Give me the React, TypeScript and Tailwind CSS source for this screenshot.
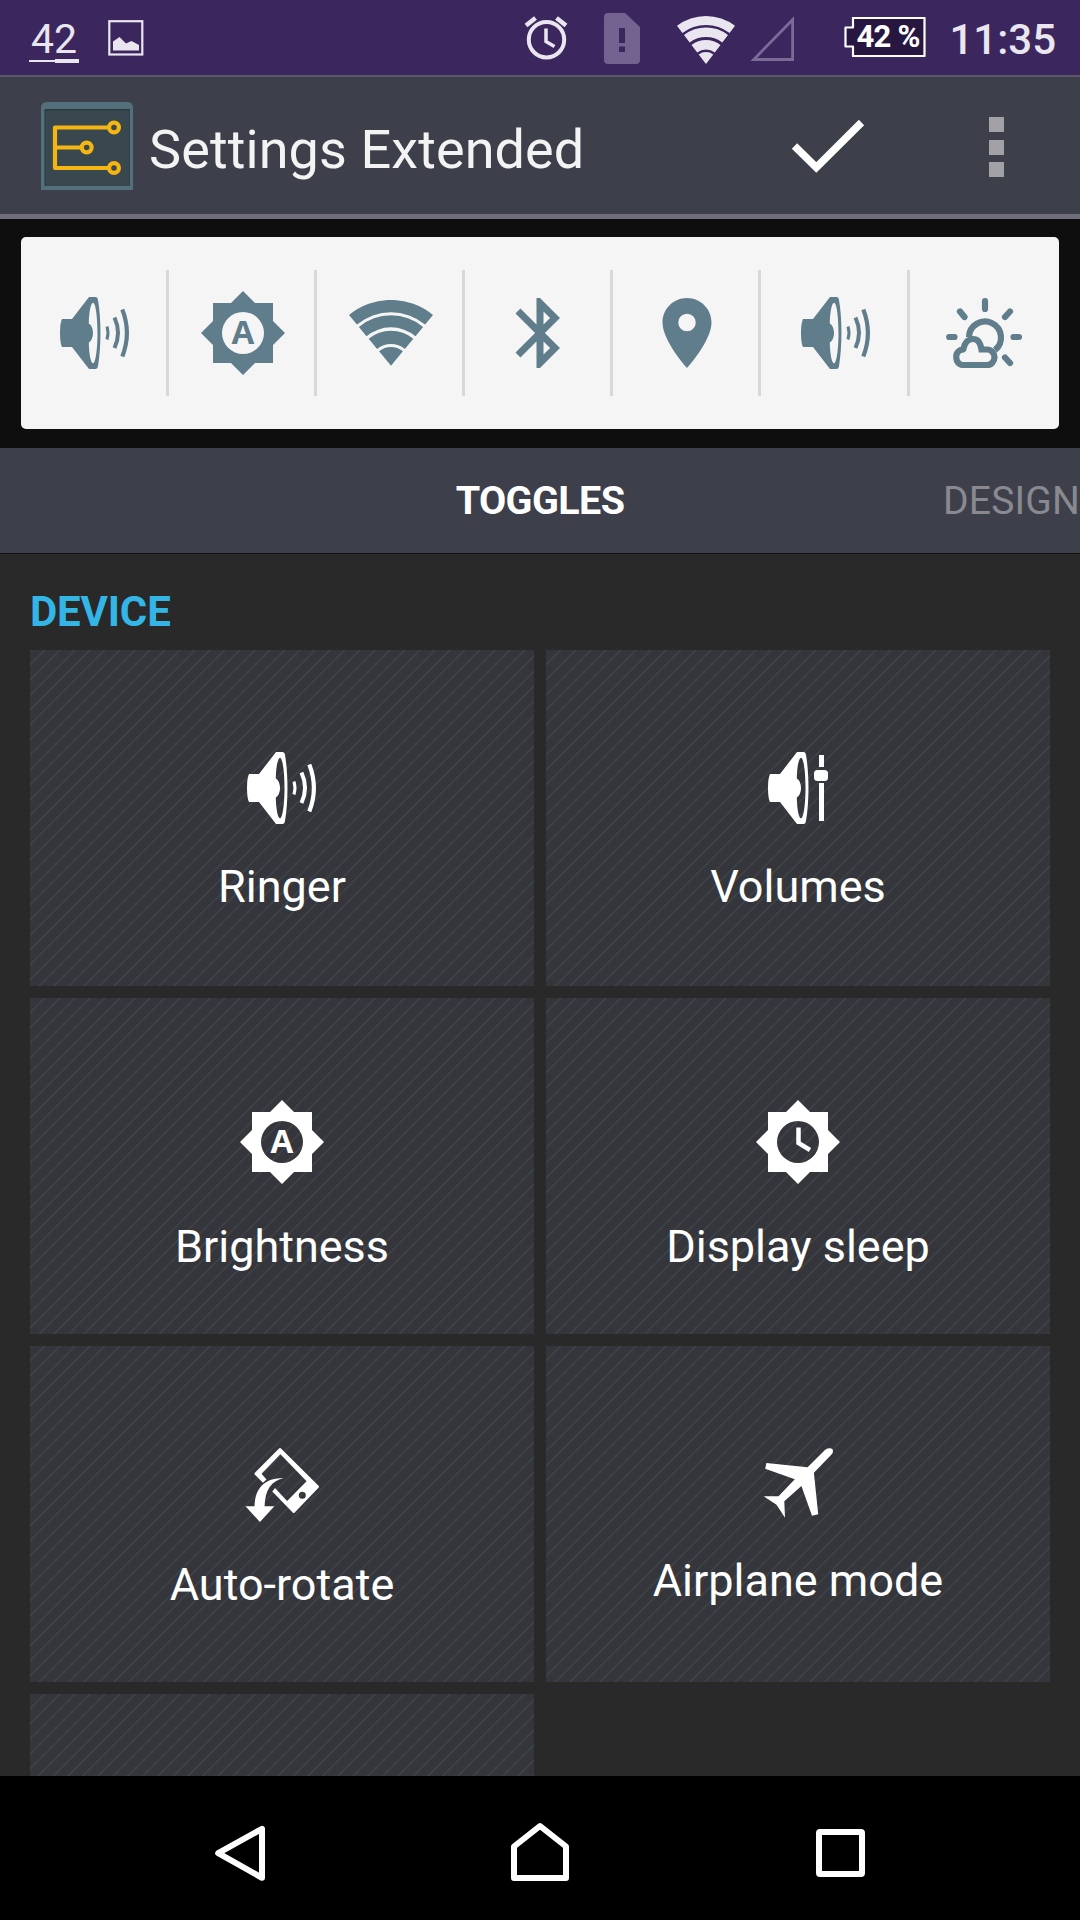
import type { ReactNode } from "react";
import { MdBluetooth, MdLocationOn } from "react-icons/md";

type Toggle = {
  label: string;
  icon: ReactNode;
};

const SpeakerCone = () => (
  <path
    fillRule="evenodd"
    d="M2 22H12L29 0H35.5Q37.5 0 38 3C41.3 22 41.3 50 38 69Q37.5 72 35.5 72H29L12 50H2Q0 46 0 36T2 22ZM33 5.7C31 5.7 29 14 28.8 26.5C31.5 28 33 32 33 36S31.5 44 28.8 45.5C29 58 31 66.3 33 66.3C35.5 66.3 37.5 53 37.5 36S35.5 5.7 33 5.7Z"
  />
);

const RingerIcon = () => (
  <svg width="70" height="72" viewBox="0 0 70 72" fill="currentColor">
    <SpeakerCone />
    <g fill="none" stroke="currentColor">
      <path d="M47 29.5Q49 36 47 42.5" strokeWidth="3" />
      <path d="M54.5 20.5Q61.5 36 54.5 51" strokeWidth="4" />
      <path d="M62.3 12.5Q71.5 36 62.3 59.5" strokeWidth="4.2" />
    </g>
  </svg>
);

const VolumesIcon = () => (
  <svg width="60" height="72" viewBox="0 0 60 72" fill="currentColor">
    <SpeakerCone />
    <rect x="51" y="3" width="5" height="12" />
    <rect x="46" y="18" width="14" height="11" rx="3.5" />
    <rect x="51" y="31" width="5" height="38" />
  </svg>
);

const Gear = ({ children }: { children: ReactNode }) => (
  <svg width="84" height="84" viewBox="-42 -42 84 84" fill="currentColor">
    <path
      fillRule="evenodd"
      d="M0-42L12-30H30V-12L42 0L30 12V30H12L0 42L-12 30H-30V12L-42 0L-30-12V-30H-12ZM0-21A21 21 0 1 0 0 21A21 21 0 1 0 0-21Z"
    />
    {children}
  </svg>
);

const BrightnessIcon = () => (
  <Gear>
    <text
      y="11"
      textAnchor="middle"
      className="font-['Open_Sans',sans-serif] text-[33px] font-bold"
    >
      A
    </text>
  </Gear>
);

const DisplaySleepIcon = () => (
  <Gear>
    <path d="M0.5-14.5V1L12 8" fill="none" stroke="currentColor" strokeWidth="4.5" />
  </Gear>
);

const AutoRotateIcon = () => (
  <svg width="75" height="74" viewBox="0 0 75 74" fill="currentColor">
    <path
      fillRule="evenodd"
      d="M34 0.6Q35 -0.4 36 0.6L73.5 37.7Q74.5 38.7 73.5 39.7L49.7 64.5Q48.7 65.5 47.7 64.5L27.3 43.5L30 40L42.1 53L61.6 33.3L35.4 6.3L16.5 25.7L21.5 31.5L18 34.8L9.9 26.7Q9 25.7 9.9 24.7ZM57.3 43.8A3.5 3.5 0 1 0 57.3 50.8A3.5 3.5 0 1 0 57.3 43.8Z"
    />
    <path d="M0.5 58.3H9.5C10 45 15 30 38.6 30C26 33 20 42 19.6 58.3H29.3L14.9 74Z" />
  </svg>
);

const AirplaneIcon = () => (
  <svg width="69" height="70" viewBox="0 0 69 70" fill="currentColor">
    <path d="M43.6 19.3L61.5 1.5Q63.5 0 66.5 0.2Q69 0.4 69 3Q69 5 67.5 6.5L49.9 24.7L54.2 66.3L48 67.7L37.4 38L20.3 53.3L21 69.7L12.5 56.7L-0.3 48.3H14.5L30.8 31.3L1.2 20.7L2.4 15Z" />
  </svg>
);

const WeatherIcon = () => (
  <svg
    width="76"
    height="71"
    viewBox="0 0 76 71"
    fill="none"
    stroke="currentColor"
    strokeWidth="6.2"
    strokeLinecap="round"
  >
    <path d="M39 3.2V11M67.5 39H73M3.2 39H8.5M59 19L64 13.5M14 13.5L18.5 19M59 59.5L64 65" />
    <path d="M23 39A16 16 0 1 1 49 52" strokeLinecap="butt" />
    <path d="M16 67A7.5 8 0 0 1 14.5 52Q18 51.5 17.5 50.5C19 44 22.5 41 27 41S34.5 44.5 35.5 51.5H41A7.5 7.75 0 0 1 41 67Z" />
  </svg>
);

const WifiIcon = () => (
  <svg width="84" height="66" viewBox="0 0 84 66" fill="currentColor">
    <path d="M0 15.1A65.7 65.7 0 0 1 84 15.1L76.1 24.6A53.4 53.4 0 0 0 7.9 24.6Z" />
    <path d="M9.9 26.9A50.4 50.4 0 0 1 74.1 26.9L66.5 36.2A38.4 38.4 0 0 0 17.5 36.2Z" />
    <path d="M19.7 38.7A35 35 0 0 1 64.3 38.7L55.9 49A21.7 21.7 0 0 0 28.1 49Z" />
    <path d="M30.1 51.3A18.7 18.7 0 0 1 53.9 51.3L42 65.7Z" />
  </svg>
);

const panelIcons: ReactNode[] = [
  <RingerIcon />,
  <BrightnessIcon />,
  <WifiIcon />,
  <MdBluetooth size={84} className="ml-0.5" />,
  <MdLocationOn size={84} />,
  <RingerIcon />,
  <WeatherIcon />,
];

const toggles: Toggle[] = [
  { label: "Ringer", icon: <RingerIcon /> },
  { label: "Volumes", icon: <VolumesIcon /> },
  { label: "Brightness", icon: <BrightnessIcon /> },
  { label: "Display sleep", icon: <DisplaySleepIcon /> },
  { label: "Auto-rotate", icon: <AutoRotateIcon /> },
  { label: "Airplane mode", icon: <AirplaneIcon /> },
];

const cardClass =
  "bg-[#35363b] bg-[linear-gradient(135deg,#3f4348_0%,#3f4348_2%,transparent_5%,transparent_45%,#3f4348_48%,#3f4348_52%,transparent_55%,transparent_95%,#3f4348_98%,#3f4348_100%)] bg-[size:15px_15px]";

const StatusBar = () => (
  <header className="flex h-[75px] shrink-0 items-start bg-[#3c265e] text-[#e9e6f0]">
    <div className="ml-[29px] flex w-[50px] flex-col items-center">
      <span className="mt-[18px] text-[41px] leading-[42px]">42</span>
      <div className="-mt-px flex w-full items-end">
        <div className="mb-px h-0.5 w-[26px] bg-current" />
        <div className="h-1 w-6 bg-current" />
      </div>
    </div>
    <svg className="mt-5 ml-[29px]" width="36" height="36" viewBox="0 0 36 36">
      <rect x="1.3" y="1.2" width="33" height="33.3" fill="none" stroke="currentColor" strokeWidth="2.2" />
      <path d="M5 30.5V21.5L11.5 17L18 23.5L23.5 21L31 25V30.5Z" fill="currentColor" />
    </svg>

    <svg
      className="mt-[15px] ml-auto"
      width="46"
      height="46"
      viewBox="0 0 46 46"
      fill="none"
      stroke="currentColor"
      strokeWidth="4"
    >
      <circle cx="22.5" cy="24.7" r="17.7" />
      <path d="M22 13.5V26.5L30.5 31.5" strokeWidth="3.5" />
      <path d="M2 10.5L11.5 3M32.5 3L42 10.5" strokeWidth="4.5" />
    </svg>
    <svg className="mt-[13px] ml-[34px]" width="36" height="51" viewBox="0 0 36 51">
      <path
        d="M4 0H21L36 14V47Q36 51 32 51H4Q0 51 0 47V4Q0 0 4 0ZM15 15V30H21V15ZM15 33.5V39H21V33.5Z"
        fill="#746290"
        fillRule="evenodd"
      />
    </svg>
    <svg className="mt-4 ml-[37px]" width="58" height="48" viewBox="0 0 58 48" fill="currentColor">
      <path d="M0 9.8A48 48 0 0 1 58 9.8L52.6 16.9A39 39 0 0 0 5.4 16.9Z" />
      <path d="M7 19A36.5 36.5 0 0 1 51 19L45.3 26.5A27 27 0 0 0 12.7 26.5Z" />
      <path d="M14.5 28.9A24 24 0 0 1 43.5 28.9L37.8 36.5A14.5 14.5 0 0 0 20.2 36.5Z" />
      <path d="M21.7 38.5A12 12 0 0 1 36.3 38.5L29 48Z" />
    </svg>
    <svg className="mt-4 ml-[15px]" width="44" height="45" viewBox="0 0 44 45">
      <path d="M3.8 43.5L42.6 3.8V43.5Z" fill="none" stroke="#7c6b97" strokeWidth="2.8" />
    </svg>
    <div className="relative mt-[17px] ml-[50px] flex h-10 w-[82px]">
      <svg className="absolute inset-0" width="82" height="40" viewBox="0 0 82 40">
        <path
          d="M9 1H80.5V39H9V29.5H1.5V10.5H9Z"
          fill="#271640"
          stroke="#fff"
          strokeWidth="2.2"
          strokeLinejoin="round"
        />
      </svg>
      <span className="relative mt-0.5 ml-3 text-[31px] leading-9 font-bold tracking-[-0.7px] whitespace-nowrap text-white">
        42 %
      </span>
    </div>
    <span className="mt-[19px] mr-6 ml-[23px] text-[42px] leading-[42px] font-medium">11:35</span>
  </header>
);

const AppBar = () => (
  <div className="flex h-[144px] shrink-0 items-start border-t-2 border-b-[5px] border-t-[#5b5869] border-b-[#6f6e7a] bg-[#3d404b]">
    <svg className="mt-[25px] ml-10" width="94" height="90" viewBox="0 0 94 90">
      <path d="M1 6Q1 0 7 0H88Q93 0 93 6V88H1Z" fill="#536f7b" />
      <rect x="4.5" y="7" width="85.5" height="77" fill="#2b393d" />
      <rect x="5.5" y="8.5" width="84" height="75.5" fill="#38484e" />
      <g fill="none" stroke="#f5b614" strokeWidth="4.2" strokeLinejoin="round">
        <path d="M69 25.5H15V66H69M15 45.5H42" />
        <circle cx="74" cy="25.5" r="4.9" />
        <circle cx="46.7" cy="45.5" r="4.9" />
        <circle cx="74" cy="66" r="4.9" />
      </g>
    </svg>
    <h1 className="mt-[41px] ml-[15px] text-[54px] leading-[64px] tracking-[0.1px] text-[#f3f3f3]">
      Settings Extended
    </h1>
    <svg className="mt-[42px] mr-[124px] ml-auto" width="74" height="54" viewBox="0 0 74 54">
      <path d="M3.5 27L25.3 48.5L70.5 3.5" fill="none" stroke="#fff" strokeWidth="7.5" />
    </svg>
    <div className="mt-10 mr-[76px] flex flex-col gap-[7.5px]">
      <div className="size-[15px] bg-[#a1a1a7]" />
      <div className="size-[15px] bg-[#a1a1a7]" />
      <div className="size-[15px] bg-[#a1a1a7]" />
    </div>
  </div>
);

const IconPanel = () => (
  <div className="h-[229px] shrink-0 bg-[#0e0e0e] px-[21px] pt-[18px]">
    <div className="flex h-48 items-center rounded-[5px] bg-[#f5f5f5] text-[#607d8b]">
      {panelIcons.map((icon, index) => (
        <div
          key={index}
          className="flex h-[126px] w-[148.1px] items-center justify-center border-r-[3px] border-[#d8d8d8] pl-[3px] last:w-auto last:flex-1 last:border-transparent"
        >
          {icon}
        </div>
      ))}
    </div>
  </div>
);

const Tabs = () => (
  <nav className="relative flex h-[106px] shrink-0 items-start justify-center border-b border-[#111] bg-[#3d404b]">
    <span className="mt-[30px] text-[39.5px] leading-[46px] font-bold tracking-[-0.6px] text-white">TOGGLES</span>
    <span className="absolute top-[30px] left-[943px] text-[39px] leading-[46px] tracking-[0.2px] whitespace-nowrap text-[#89898f]">
      DESIGN
    </span>
  </nav>
);

const NavBar = () => (
  <footer className="flex h-36 shrink-0 items-start bg-black">
    <svg className="mt-[49px] ml-[215px]" width="50" height="57" viewBox="0 0 50 57">
      <path d="M3.2 28.2L47 3.8V52.8Z" fill="none" stroke="#fff" strokeWidth="6" strokeLinejoin="round" />
    </svg>
    <svg className="mt-[46px] ml-[246px]" width="58" height="60" viewBox="0 0 58 60">
      <path d="M3 24.5L29 4L55 24.5V56H3Z" fill="none" stroke="#fff" strokeWidth="6" strokeLinejoin="round" />
    </svg>
    <div className="mt-[53px] ml-[247px] h-12 w-[49px] rounded-[4px] border-6 border-white" />
  </footer>
);

export default function App() {
  return (
    <div className="flex h-[1920px] w-[1080px] flex-col overflow-hidden bg-[#292929] font-[Roboto,sans-serif]">
      <StatusBar />
      <AppBar />
      <IconPanel />
      <Tabs />
      <main className="min-h-0 flex-1 overflow-hidden px-[30px]">
        <h2 className="pt-[34px] pb-[14px] text-[42px] leading-[48px] font-bold tracking-[-0.2px] text-[#33b5e5]">
          DEVICE
        </h2>
        <div className="grid grid-cols-2 gap-3">
          {toggles.map(({ label, icon }) => (
            <button key={label} className={`flex h-[336px] flex-col items-center pt-[102px] text-white ${cardClass}`}>
              {icon}
              <span className="mt-10 text-[45px] leading-none">{label}</span>
            </button>
          ))}
          <div className={`h-[336px] ${cardClass}`} />
        </div>
      </main>
      <NavBar />
    </div>
  );
}
